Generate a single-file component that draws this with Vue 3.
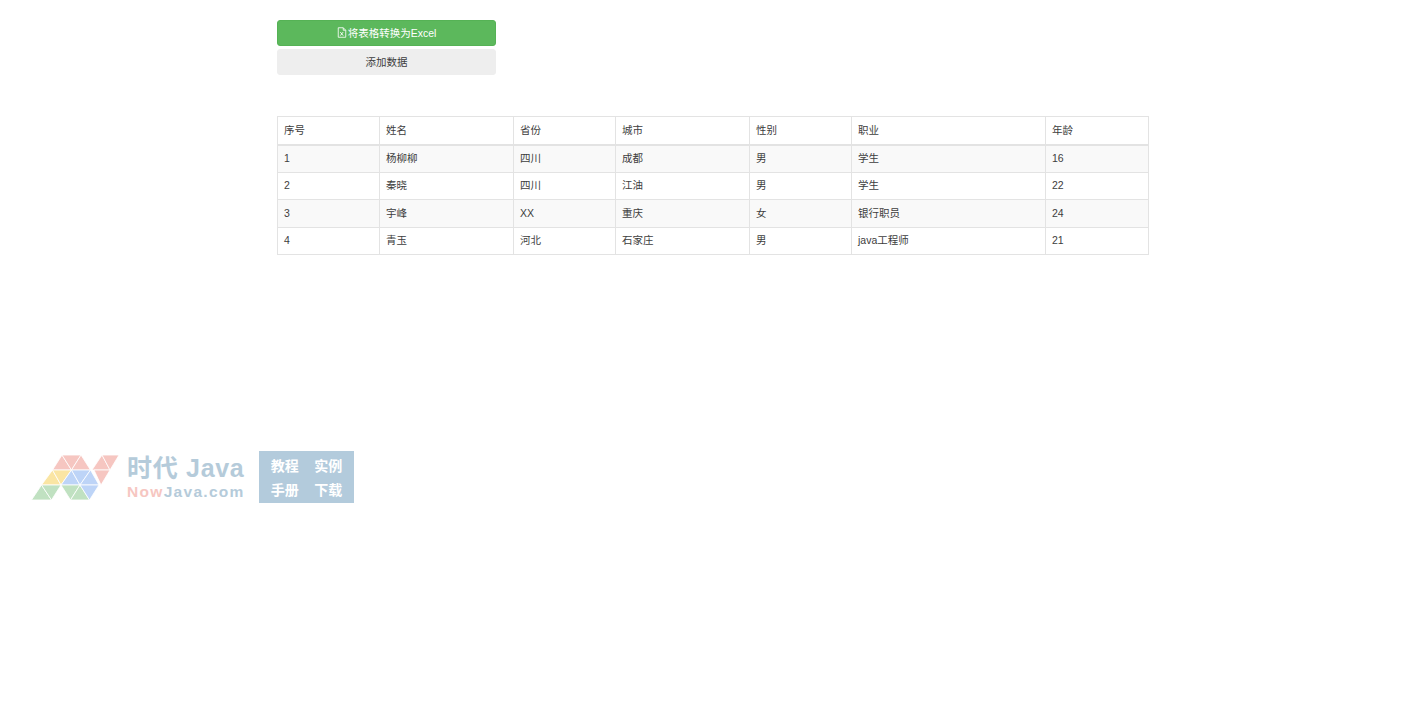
<script setup>
const columns = [
  { title: '序号', width: 102 },
  { title: '姓名', width: 134 },
  { title: '省份', width: 102 },
  { title: '城市', width: 134 },
  { title: '性别', width: 102 },
  { title: '职业', width: 194 },
  { title: '年龄', width: 103 }
]
const rows = [
  ['1', '杨柳柳', '四川', '成都', '男', '学生', '16'],
  ['2', '秦晓', '四川', '江油', '男', '学生', '22'],
  ['3', '宇峰', 'XX', '重庆', '女', '银行职员', '24'],
  ['4', '青玉', '河北', '石家庄', '男', 'java工程师', '21']
]
const red = '#f6c6c1'
const yellow = '#fae5a3'
const blue = '#bdd4f7'
const green = '#c0e1c1'
const triangles = [
  ['22.5,15 41.5,15 32,0', red], ['32,0 51,0 41.5,15', red], ['41.5,15 60.5,15 51,0', red],
  ['62,15 80,15 72,0', red], ['72,0 89,0 80,15', red],
  ['64,15 80,15 71,30', red],
  ['11.5,30 31,30 22.5,15', yellow], ['22.5,15 41.5,15 31,30', yellow],
  ['31,30 50,30 41.5,15', blue], ['41.5,15 60.5,15 50,30', blue], ['50,30 69,30 60.5,15', blue],
  ['1.5,45 21.5,45 11.5,30', green], ['11.5,30 31,30 21.5,45', green],
  ['31,30 50,30 40.5,45', green], ['40.5,45 59.5,45 50,30', green],
  ['50,30 69,30 59.5,45', blue]
]
</script>

<template>
  <div class="page">
    <div class="actions">
      <button class="btn btn-success" type="button">
        <svg class="file-icon" viewBox="0 0 12 13" aria-hidden="true">
          <path d="M1.5.8h6l3 3v8.4h-9z M7.5.8v3h3" fill="none" stroke="#fff" stroke-width="1" />
          <path d="M4 6l3.4 4.2M7.4 6L4 10.2" fill="none" stroke="#fff" stroke-width="1.1" />
        </svg>
        将表格转换为Excel
      </button>
      <button class="btn btn-default" type="button">添加数据</button>
    </div>

    <table class="data-table">
      <colgroup>
        <col v-for="c in columns" :key="c.title" :style="{ width: c.width + 'px' }" />
      </colgroup>
      <thead>
        <tr>
          <th v-for="c in columns" :key="c.title">{{ c.title }}</th>
        </tr>
      </thead>
      <tbody>
        <tr v-for="row in rows" :key="row[0]">
          <td v-for="(cell, i) in row" :key="i">{{ cell }}</td>
        </tr>
      </tbody>
    </table>

    <div class="watermark">
      <svg class="mark" viewBox="0 0 90 46" aria-hidden="true">
        <polygon
          v-for="(t, i) in triangles"
          :key="i"
          :points="t[0]"
          :fill="t[1]"
          stroke="#fff"
          stroke-width="0.8"
        />
      </svg>
      <div class="brand">
        <div class="brand-cn">时代 Java</div>
        <div class="brand-en"><span class="now">Now</span>Java.com</div>
      </div>
      <div class="links">
        <span>教程</span><span>实例</span><span>手册</span><span>下载</span>
      </div>
    </div>
  </div>
</template>

<style scoped>
.page {
  box-sizing: border-box;
  width: 1425px;
  height: 718px;
  padding: 20px 0 0 277px;
  background: #fff;
  color: #3d3d3d;
  font-family: "Liberation Sans", "Noto Sans CJK SC", sans-serif;
  font-size: 10.5px;
  overflow: hidden;
}
.actions {
  display: flex;
  flex-direction: column;
  gap: 3px;
  width: 219px;
}
.btn {
  display: flex;
  align-items: center;
  justify-content: center;
  gap: 1px;
  height: 26px;
  padding: 0 0 2px;
  border: 1px solid transparent;
  border-radius: 3px;
  font: inherit;
}
.btn-success {
  background: #5cb85c;
  border-color: #55b255;
  color: #fff;
}
.btn-default {
  background: #eee;
  border-color: #eee;
  color: #3d3d3d;
}
.file-icon {
  width: 10px;
  height: 11px;
}
.data-table {
  width: 871px;
  margin-top: 41px;
  border-collapse: collapse;
  table-layout: fixed;
}
th,
td {
  box-sizing: border-box;
  padding: 0 6px;
  border: 1px solid #e3e3e3;
  font-weight: 400;
  text-align: left;
  line-height: 15px;
}
th {
  height: 28px;
  border-bottom-width: 2px;
}
td {
  height: 27.5px;
}
tbody tr:nth-child(odd) {
  background: #f9f9f9;
}
.watermark {
  position: absolute;
  left: 30px;
  top: 451px;
  display: flex;
  align-items: flex-start;
}
.mark {
  width: 90px;
  height: 46px;
  margin-top: 4px;
}
.brand {
  width: 132px;
  margin-left: 7px;
  color: #b5cbda;
  font-weight: 700;
}
.brand-cn {
  margin-top: 2px;
  font-size: 25px;
  line-height: 30px;
  letter-spacing: 0.7px;
  white-space: nowrap;
}
.brand-en {
  font-size: 15.5px;
  line-height: 19px;
  letter-spacing: 1.3px;
  margin-top: -1px;
}
.now {
  color: #f6c6c1;
}
.links {
  display: grid;
  grid-template-columns: 1fr 1fr;
  align-items: center;
  justify-items: center;
  box-sizing: border-box;
  width: 95px;
  height: 52px;
  padding: 2px 4px 2px;
  background: #b3cbdc;
  color: #fff;
  font-size: 14px;
  font-weight: 700;
}
</style>
